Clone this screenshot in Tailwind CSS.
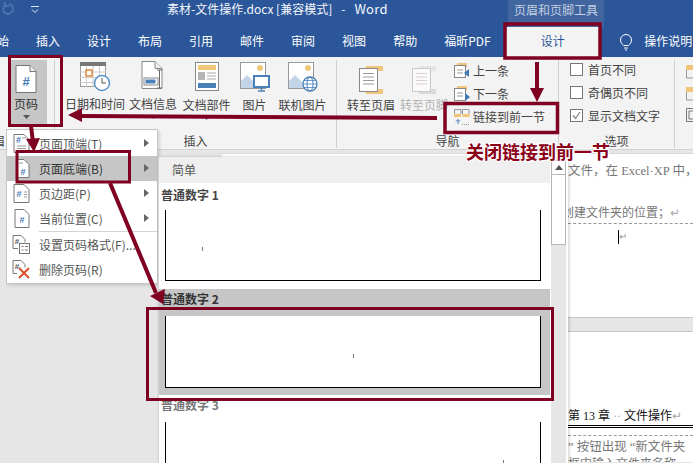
<!DOCTYPE html>
<html lang="zh">
<head>
<meta charset="utf-8">
<script src="https://cdn.jsdelivr.net/npm/@tailwindcss/browser@4"></script>
</head>
<body class="m-0">
<div class="relative w-[693px] h-[463px] overflow-hidden bg-[#e6e6e6] font-['Noto_Sans_CJK_SC','Noto_Sans',sans-serif] text-[12px] leading-none text-[#444]">

  <!-- title bar -->
  <div class="flex h-[27px] bg-[#2b579a] text-white">
    <svg class="ml-[2px] mt-[2px] w-[12px] h-[14px] shrink-0" viewBox="0 0 12 14" fill="none" stroke="#4a72ad" stroke-width="2"><path d="M3 3a5 5 0 1 0 4-1M3 0v4h4"/></svg>
    <svg class="ml-[16px] mt-[6px] w-[10px] h-[8px] shrink-0" viewBox="0 0 10 8" fill="none" stroke="#dfe6f0"><path d="M1 .5h8M2 3.5l3 3 3-3"/></svg>
    <div class="ml-[127px] w-[221px] pt-[2px] text-[12px] leading-[14px] whitespace-nowrap text-[#f4f6fa]">素材-文件操作.docx [兼容模式]<span class="ml-[9px]">-</span><span class="ml-[9px] text-[13px] tracking-[0.3px]">Word</span></div>
    <div class="ml-[120px] w-[96px] h-[27px] bg-[#41659f] text-[#c3cfe2] text-[12px] leading-[20px] text-center whitespace-nowrap">页眉和页脚工具</div>
  </div>

  <!-- tabs -->
  <div class="flex h-[30px] bg-[#2b579a] text-white text-[12px] leading-[28px] whitespace-nowrap">
    <span class="-ml-[15px]">开始</span>
    <span class="ml-[27px]">插入</span>
    <span class="ml-[27px]">设计</span>
    <span class="ml-[27px]">布局</span>
    <span class="ml-[27px]">引用</span>
    <span class="ml-[27px]">邮件</span>
    <span class="ml-[27px]">审阅</span>
    <span class="ml-[27px]">视图</span>
    <span class="ml-[27px]">帮助</span>
    <span class="ml-[27px] w-[47px]">福昕PDF</span>
    <span class="ml-[15px] w-[93px] bg-[#f3f3f3] text-[#2b579a] text-center">设计</span>
    <svg class="ml-[20px] mt-[7px] w-[14px] h-[17px] shrink-0" viewBox="0 0 14 17" fill="none" stroke="#fff"><path d="M4.5 11.5C3 10 1.5 8.5 1.5 6a5.5 5.5 0 0 1 11 0c0 2.500-1.500 4-3 5.500zM5 14h4M6 16h2"/></svg>
    <span class="ml-[11px]">操作说明</span>
  </div>

  <!-- ribbon -->
  <div class="flex h-[93px] bg-[#f3f3f3] border-b border-[#d2d2d2] whitespace-nowrap">
    <!-- 页码 group -->
    <div class="relative w-[55px] shrink-0 border-r border-[#d0d0d0] h-[88px] mt-[3px]">
      <span class="absolute left-0 top-[75px] text-[12px] -ml-[7px] w-[12px] overflow-hidden">眉</span>
      <div class="ml-[10px] w-[37px] h-[65px] bg-[#c6c6c6] flex flex-col items-center">
        <svg class="mt-[5px] -ml-[5px] w-[22px] h-[28px]" viewBox="0 0 22 28"><path d="M1 .5h14l6 6V27.500H1z" fill="#fff" stroke="#777"/><path d="M15 .5v6h6" fill="#eee" stroke="#777"/><text x="11" y="21" text-anchor="middle" font-size="13" font-weight="700" font-family="Liberation Sans" fill="#3f78b5">#</text></svg>
        <span class="mt-[5px] -ml-[5px] text-[#333]">页码</span>
        <svg class="mt-[5px] w-[7px] h-[4px] -ml-[5px]" viewBox="0 0 7 4"><path d="M0 0h7L3.500 4z" fill="#555"/></svg>
      </div>
    </div>

    <!-- 插入 group -->
    <div class="relative w-[282px] shrink-0 border-r border-[#d0d0d0] h-[88px] mt-[3px]">
      <div class="flex h-[70px] pl-[10px] text-[#444] text-[12px]">
        <div class="w-[60px] flex flex-col items-center">
          <svg class="mt-[2px] w-[31px] h-[30px]" viewBox="0 0 31 30"><rect x=".5" y=".5" width="25" height="24" fill="#fff" stroke="#999"/><rect x="0" y="0" width="26" height="4" fill="#777"/><path d="M0 10h26M0 15.500h26M0 20.500h26M6.500 4v21M13 4v21M19.500 4v21" stroke="#ccc"/><rect x="6" y="8" width="6" height="6" fill="#fff" stroke="#e08a3c" stroke-width="1.500"/><circle cx="22" cy="21" r="7.500" fill="#fff" stroke="#5b93c9" stroke-width="1.500"/><path d="M22 16v5h4" fill="none" stroke="#555"/></svg>
          <span class="mt-[6px]">日期和时间</span>
        </div>
        <div class="w-[56px] flex flex-col items-center">
          <svg class="mt-[1px] w-[24px] h-[32px]" viewBox="0 0 24 32"><path d="M1 .5h13l7 7V27.500H1z" fill="#fff" stroke="#888"/><path d="M14 .5v7h7" fill="#eee" stroke="#888"/><rect x="3" y="17" width="14" height="7" fill="#fff" stroke="#888"/><rect x="4.500" y="18.500" width="10" height="4" fill="#4a80b8"/><path d="M16 9h5M16 27h5M18.500 9v18" stroke="#666" fill="none"/></svg>
          <span class="mt-[5px]">文档信息</span>
          <svg class="mt-[5px] w-[7px] h-[4px]" viewBox="0 0 7 4"><path d="M0 0h7L3.500 4z" fill="#666"/></svg>
        </div>
        <div class="w-[47px] ml-[2px] flex flex-col items-center">
          <svg class="mt-[2px] w-[24px] h-[29px]" viewBox="0 0 24 29"><rect x=".5" y=".5" width="23" height="28" fill="#fff" stroke="#888"/><rect x="3" y="3" width="18" height="5" fill="#efc67a"/><rect x="3" y="10" width="7" height="8" fill="#b5b5b5"/><path d="M12 11h9M12 14h9M12 17h9" stroke="#aaa"/><rect x="3" y="21" width="18" height="5" fill="#4a80b8"/></svg>
          <span class="mt-[8px]">文档部件</span>
          <svg class="mt-[5px] w-[7px] h-[4px]" viewBox="0 0 7 4"><path d="M0 0h7L3.500 4z" fill="#666"/></svg>
        </div>
        <div class="w-[47px] ml-[1px] flex flex-col items-center">
          <svg class="mt-[2px] w-[30px] h-[31px]" viewBox="0 0 30 31"><rect x=".5" y=".5" width="25" height="26" fill="#fff" stroke="#999"/><circle cx="20" cy="6" r="3" fill="#efc67a"/><path d="M1 26V19l6-6 7 7 4 0v6z" fill="#c3d4e6"/><rect x="14" y="14" width="15" height="11" fill="#fff" stroke="#4a80b8" stroke-width="2"/><path d="M21.500 25v3M18 29h7" stroke="#4a80b8" stroke-width="1.500"/></svg>
          <span class="mt-[6px]">图片</span>
        </div>
        <div class="w-[49px] flex flex-col items-center">
          <svg class="mt-[2px] w-[30px] h-[31px]" viewBox="0 0 30 31"><rect x=".5" y=".5" width="25" height="26" fill="#fff" stroke="#999"/><circle cx="20" cy="6" r="3" fill="#efc67a"/><path d="M1 26V19l6-6 7 7 4 0v6z" fill="#c3d4e6"/><circle cx="22" cy="22" r="7" fill="#fff" stroke="#4a80b8" stroke-width="1.300"/><ellipse cx="22" cy="22" rx="3" ry="7" fill="none" stroke="#4a80b8"/><path d="M15 22h14M16 18.500h12M16 25.500h12" stroke="#4a80b8" stroke-width=".8"/></svg>
          <span class="mt-[6px]">联机图片</span>
        </div>
      </div>
      <div class="text-center mt-[5px]">插入</div>
    </div>

    <!-- 导航 group -->
    <div class="relative w-[222px] shrink-0 border-r border-[#d0d0d0] h-[88px] mt-[3px]">
      <div class="flex h-[70px] pl-[10px]">
        <div class="w-[48px] flex flex-col items-center">
          <svg class="mt-[6px] w-[24px] h-[29px]" viewBox="0 0 24 29"><rect x="7" y="0" width="17" height="5" fill="#efc67a"/><rect x="7" y="23" width="17" height="5" fill="#efc67a"/><rect x=".5" y="2.500" width="18" height="23" fill="#fff" stroke="#888"/><path d="M4 7.500h11M4 11h11M4 14.500h11M4 18h11" stroke="#999"/></svg>
          <span class="mt-[4px]">转至页眉</span>
        </div>
        <div class="w-[48px] ml-[5px] flex flex-col items-center text-[#b1b1b1]">
          <svg class="mt-[6px] w-[24px] h-[29px]" viewBox="0 0 24 29"><rect x="7" y="0" width="17" height="5" fill="#e6e6e6"/><rect x="7" y="23" width="17" height="5" fill="#dcd9dc"/><rect x=".5" y="2.500" width="18" height="23" fill="#fafafa" stroke="#c8c8c8"/><path d="M4 7.500h11M4 11h11M4 14.500h11M4 18h11" stroke="#d9cfd9"/></svg>
          <span class="mt-[4px]">转至页脚</span>
        </div>
        <div class="ml-[6px] flex flex-col">
          <div class="flex items-center h-[22px]">
            <svg class="w-[16px] h-[16px]" viewBox="0 0 16 16"><rect x="3" y="0" width="10" height="4" fill="#efc67a"/><rect x=".5" y="2.500" width="11" height="12" fill="#fff" stroke="#888"/><path d="M3 7h6M3 10h6" stroke="#999"/><path d="M15 6v8l-5-4z" fill="#3f78b5"/></svg>
            <span class="ml-[3px]">上一条</span>
          </div>
          <div class="flex items-center h-[23px]">
            <svg class="w-[16px] h-[16px]" viewBox="0 0 16 16"><rect x="3" y="0" width="10" height="4" fill="#efc67a"/><rect x=".5" y="2.500" width="11" height="12" fill="#fff" stroke="#888"/><path d="M3 7h6M3 10h6" stroke="#999"/><path d="M11 7v8l5-4z" fill="#3f78b5"/></svg>
            <span class="ml-[3px]">下一条</span>
          </div>
          <div class="flex items-center h-[23px]">
            <svg class="w-[16px] h-[16px]" viewBox="0 0 16 16"><path d="M.5 5V.5h6.500V5M8.500 5V.5H15V5" fill="none" stroke="#999"/><rect x="0" y="5" width="7" height="3" fill="#efc67a"/><rect x="8.500" y="5" width="7" height="3" fill="#efc67a"/><path d="M4 15v-4M2 12.500l2-2 2 2" fill="none" stroke="#3f78b5"/><path d="M8 15.500h7" stroke="#999" stroke-dasharray="1 1"/></svg>
            <span class="ml-[3px]">链接到前一节</span>
          </div>
        </div>
      </div>
      <div class="text-center mt-[5px]">导航</div>
    </div>

    <!-- 选项 group -->
    <div class="relative w-[116px] shrink-0 border-r border-[#d0d0d0] h-[88px] mt-[3px]">
      <div class="flex flex-col h-[70px] pl-[11px] -mt-[2px]">
        <div class="flex items-center h-[23px] shrink-0"><span class="w-[13px] h-[13px] bg-white border border-[#777]"></span><span class="ml-[5px]">首页不同</span></div>
        <div class="flex items-center h-[23px] shrink-0"><span class="w-[13px] h-[13px] bg-white border border-[#777]"></span><span class="ml-[5px]">奇偶页不同</span></div>
        <div class="flex items-center h-[23px] shrink-0"><svg class="w-[13px] h-[13px]" viewBox="0 0 13 13"><rect x=".5" y=".5" width="12" height="12" fill="#fff" stroke="#777"/><path d="M3 6.500l2.500 3L10 3" fill="none" stroke="#888" stroke-width="1.300"/></svg><span class="ml-[5px]">显示文档文字</span></div>
      </div>
      <div class="text-center mt-[7px]">选项</div>
    </div>

    <!-- next group, cut off -->
    <div class="flex flex-col gap-[7px] ml-[11px] mt-[7px] w-[10px] overflow-hidden">
      <svg class="w-[10px] h-[15px] shrink-0" viewBox="0 0 10 15"><rect x="0" y="1" width="10" height="5" fill="#efc67a"/><path d="M.5 6v8H10" fill="none" stroke="#999"/></svg>
      <svg class="w-[10px] h-[15px] shrink-0" viewBox="0 0 10 15"><rect x="0" y="1" width="10" height="5" fill="#efc67a"/><path d="M.5 6v8H10" fill="none" stroke="#999"/></svg>
      <svg class="w-[10px] h-[15px] shrink-0" viewBox="0 0 10 15"><path d="M.5 .5v13H10V.5H.5M3 3h7v8H3z" fill="none" stroke="#777"/></svg>
    </div>
  </div>

  <!-- document -->
  <div class="h-[312px] overflow-hidden pt-[3px] pl-[222px] font-['Liberation_Serif','Noto_Sans_CJK_SC',serif] text-[#777]">
    <div class="h-[164px] bg-white border-t border-[#d8d8d8] pl-[346px] relative">
      <div class="pt-[9px] text-[12.500px] leading-[16px] whitespace-nowrap">文件，在 Excel·XP 中，</div>
      <div class="mt-[26px] -ml-[6px] text-[12px] leading-[16px] whitespace-nowrap">创建文件夹的位置；<span class="text-[#aaa]">↵</span></div>
      <div class="mt-[2px] border-t border-dashed border-[#999]"></div>
      <div class="mt-[6px] ml-[50px] h-[14px] w-[10px] border-l border-black text-[#999] text-[10px] leading-[13px]">↵</div>
    </div>
    <div class="h-[15px] border-y border-[#c6c6c6] bg-[#e6e6e6]"></div>
    <div class="h-[140px] bg-white pl-[346px]">
      <div class="pt-[76px] text-[12px] leading-[16px] text-[#111] whitespace-nowrap">第 13 章 <span class="text-[#aaa]">··</span> 文件操作<span class="text-[#aaa]">↵</span></div>
      <div class="mt-[1px] h-[3px] border-y border-black"></div>
      <div class="mt-[7px] border-t border-dashed border-[#999]"></div>
      <div class="mt-[3px] text-[12.500px] leading-[16px] whitespace-nowrap">” 按钮出现 “新文件夹</div>
      <div class="mt-[1px] text-[12px] leading-[16px] whitespace-nowrap">框中输入文件夹名称</div>
    </div>
  </div>

  <!-- dropdown menu -->
  <div class="absolute left-[6px] top-[129px] w-[152px] h-[155px] bg-white border border-[#c6c6c6] shadow-[2px_2px_3px_rgba(0,0,0,0.12)] pt-[1px] whitespace-nowrap text-[#555]">
    <div class="flex items-center h-[25px] relative">
      <svg class="ml-[6px] w-[17px] h-[19px]" viewBox="0 0 17 19"><path d="M1 .5h10l5 5v13H1z" fill="#fff" stroke="#777"/><text x="5.500" y="9" text-anchor="middle" font-size="9" font-weight="700" font-family="Liberation Sans" fill="#3f78b5">#</text><path d="M9 4h4M4 12h9M4 14.500h9" stroke="#999"/></svg>
      <span class="ml-[9px]">页面顶端(T)</span>
      <svg class="absolute right-[8px] top-[8px] w-[5px] h-[8px]" viewBox="0 0 5 8"><path d="M0 0l5 4-5 4z" fill="#666"/></svg>
    </div>
    <div class="flex items-center h-[25px] relative bg-[#c6c6c6] text-[#333]">
      <svg class="ml-[6px] w-[17px] h-[19px]" viewBox="0 0 17 19"><path d="M4 .5h7l5 5v13H4z" fill="#fff" stroke="#777"/><text x="10" y="16" text-anchor="middle" font-size="9" font-weight="700" font-family="Liberation Sans" fill="#3f78b5">#</text><path d="M6 4h4" stroke="#999"/></svg>
      <span class="ml-[9px]">页面底端(B)</span>
      <svg class="absolute right-[8px] top-[8px] w-[5px] h-[8px]" viewBox="0 0 5 8"><path d="M0 0l5 4-5 4z" fill="#666"/></svg>
    </div>
    <div class="flex items-center h-[25px] relative">
      <svg class="ml-[6px] w-[17px] h-[19px]" viewBox="0 0 17 19"><path d="M1 .5h10l5 5v13H1z" fill="#fff" stroke="#777"/><text x="6" y="13" text-anchor="middle" font-size="9" font-weight="700" font-family="Liberation Sans" fill="#3f78b5">#</text><path d="M11 8h3M11 10.500h3M11 13h3" stroke="#999"/></svg>
      <span class="ml-[9px]">页边距(P)</span>
      <svg class="absolute right-[8px] top-[8px] w-[5px] h-[8px]" viewBox="0 0 5 8"><path d="M0 0l5 4-5 4z" fill="#666"/></svg>
    </div>
    <div class="flex items-center h-[25px] relative">
      <svg class="ml-[6px] w-[17px] h-[19px]" viewBox="0 0 17 19"><path d="M2 .5h9l5 5v13H2z" fill="#fff" stroke="#777"/><text x="9" y="14" text-anchor="middle" font-size="9" font-weight="700" font-family="Liberation Sans" fill="#3f78b5">#</text></svg>
      <span class="ml-[9px]">当前位置(C)</span>
      <svg class="absolute right-[8px] top-[8px] w-[5px] h-[8px]" viewBox="0 0 5 8"><path d="M0 0l5 4-5 4z" fill="#666"/></svg>
    </div>
    <div class="ml-[32px] h-[1px] bg-[#d4d4d4]"></div>
    <div class="flex items-center h-[25px] relative">
      <svg class="ml-[5px] w-[18px] h-[19px]" viewBox="0 0 18 19"><path d="M1 .5h8l4 4v3" fill="#fff" stroke="#777"/><path d="M1 .5v13h5" fill="none" stroke="#777"/><text x="5" y="9" text-anchor="middle" font-size="8" font-weight="700" font-family="Liberation Sans" fill="#555">#</text><rect x="7.500" y="8.500" width="10" height="10" fill="#fff" stroke="#777"/><path d="M9.500 11.500h2M13 11.500h3M9.500 15h2M13 15h3" stroke="#777"/></svg>
      <span class="ml-[9px]">设置页码格式(F)...</span>
    </div>
    <div class="flex items-center h-[25px] relative">
      <svg class="ml-[5px] w-[18px] h-[19px]" viewBox="0 0 18 19"><path d="M1 .5h8l4 4v3M1 .5v13h4" fill="none" stroke="#777"/><text x="5" y="9" text-anchor="middle" font-size="8" font-weight="700" font-family="Liberation Sans" fill="#555">#</text><path d="M7 8l10 10M17 8L7 18" stroke="#d8502a" stroke-width="2"/></svg>
      <span class="ml-[9px]">删除页码(R)</span>
    </div>
  </div>

  <!-- gallery panel -->
  <div class="absolute left-[158px] top-[157px] w-[410px] h-[306px] bg-white border-l border-[#d4d4d4] shadow-[1px_0_3px_rgba(0,0,0,0.2)] flex">
    <div class="w-[391px] shrink-0 overflow-hidden">
      <div class="h-[26px] bg-[#efefef] pl-[13px] leading-[26px] text-[#555]">简单</div>
      <div class="h-[27px] pl-[2px] pt-[4px] leading-[16px] font-bold text-[#444] whitespace-nowrap">普通数字 1</div>
      <div class="ml-[6px] w-[376px] h-[71px] border-x border-b border-black relative"><span class="absolute left-[36px] top-[37px] w-[1px] h-[4px] bg-[#777]"></span></div>
      <div class="mt-[8px] h-[106px] bg-[#c6c6c6] pt-[1px]">
        <div class="h-[26px] pl-[2px] pt-[1px] leading-[16px] font-bold text-[#333] whitespace-nowrap">普通数字 2</div>
        <div class="ml-[6px] w-[376px] h-[72px] bg-white border-x border-b border-black relative"><span class="absolute left-[187px] top-[38px] w-[1px] h-[4px] bg-[#777]"></span></div>
      </div>
      <div class="h-[27px] pl-[2px] pt-[2px] leading-[16px] font-bold text-[#777] whitespace-nowrap">普通数字 3</div>
      <div class="ml-[6px] w-[376px] h-[60px] border-x border-black relative"><span class="absolute right-[36px] top-[38px] w-[1px] h-[4px] bg-[#777]"></span></div>
    </div>
    <div class="w-[15px] ml-[1px] bg-[#e6e6e6] relative shrink-0">
      <div class="h-[15px] mt-[3px] bg-white border border-[#b5b5b5] flex items-center justify-center">
        <svg class="w-[8px] h-[5px]" viewBox="0 0 8 5"><path d="M4 0l4 5H0z" fill="#555"/></svg>
      </div>
      <div class="h-[70px] bg-white border border-t-0 border-[#b5b5b5]"></div>
    </div>
  </div>

  <!-- annotation overlay -->
  <svg class="absolute inset-0 w-[693px] h-[463px] pointer-events-none" viewBox="0 0 693 463" fill="none" stroke="#7f0020">
    <rect x="9.500" y="56.500" width="52" height="69" stroke-width="3"/>
    <rect x="505" y="24" width="95" height="34" stroke-width="3.500"/>
    <rect x="445" y="103.500" width="112.500" height="29" stroke-width="3.500"/>
    <rect x="17" y="151.500" width="112.500" height="30.500" stroke-width="3"/>
    <rect x="147.500" y="308.500" width="405" height="91" stroke-width="3"/>
    <path d="M537 62v28" stroke-width="4"/>
    <path d="M530 88h14l-7 14z" fill="#7f0020" stroke="none"/>
    <path d="M437 118L80 116" stroke-width="4"/>
    <path d="M82 108v14l-14-7z" fill="#7f0020" stroke="none"/>
    <path d="M31 126l2 16" stroke-width="4"/>
    <path d="M26 139l14-1-6 14z" fill="#7f0020" stroke="none"/>
    <path d="M110 183l46 110" stroke-width="4"/>
    <path d="M150 296l15-7-2 15z" fill="#7f0020" stroke="none"/>
  </svg>
  <div class="absolute left-[466px] top-[142px] text-[18px] leading-[18px] font-bold text-[#8a0018] whitespace-nowrap [text-shadow:1px_1px_1px_#fff,-1px_-1px_1px_#fff,1px_-1px_1px_#fff,-1px_1px_1px_#fff]">关闭链接到前一节</div>
</div>
</body>
</html>
